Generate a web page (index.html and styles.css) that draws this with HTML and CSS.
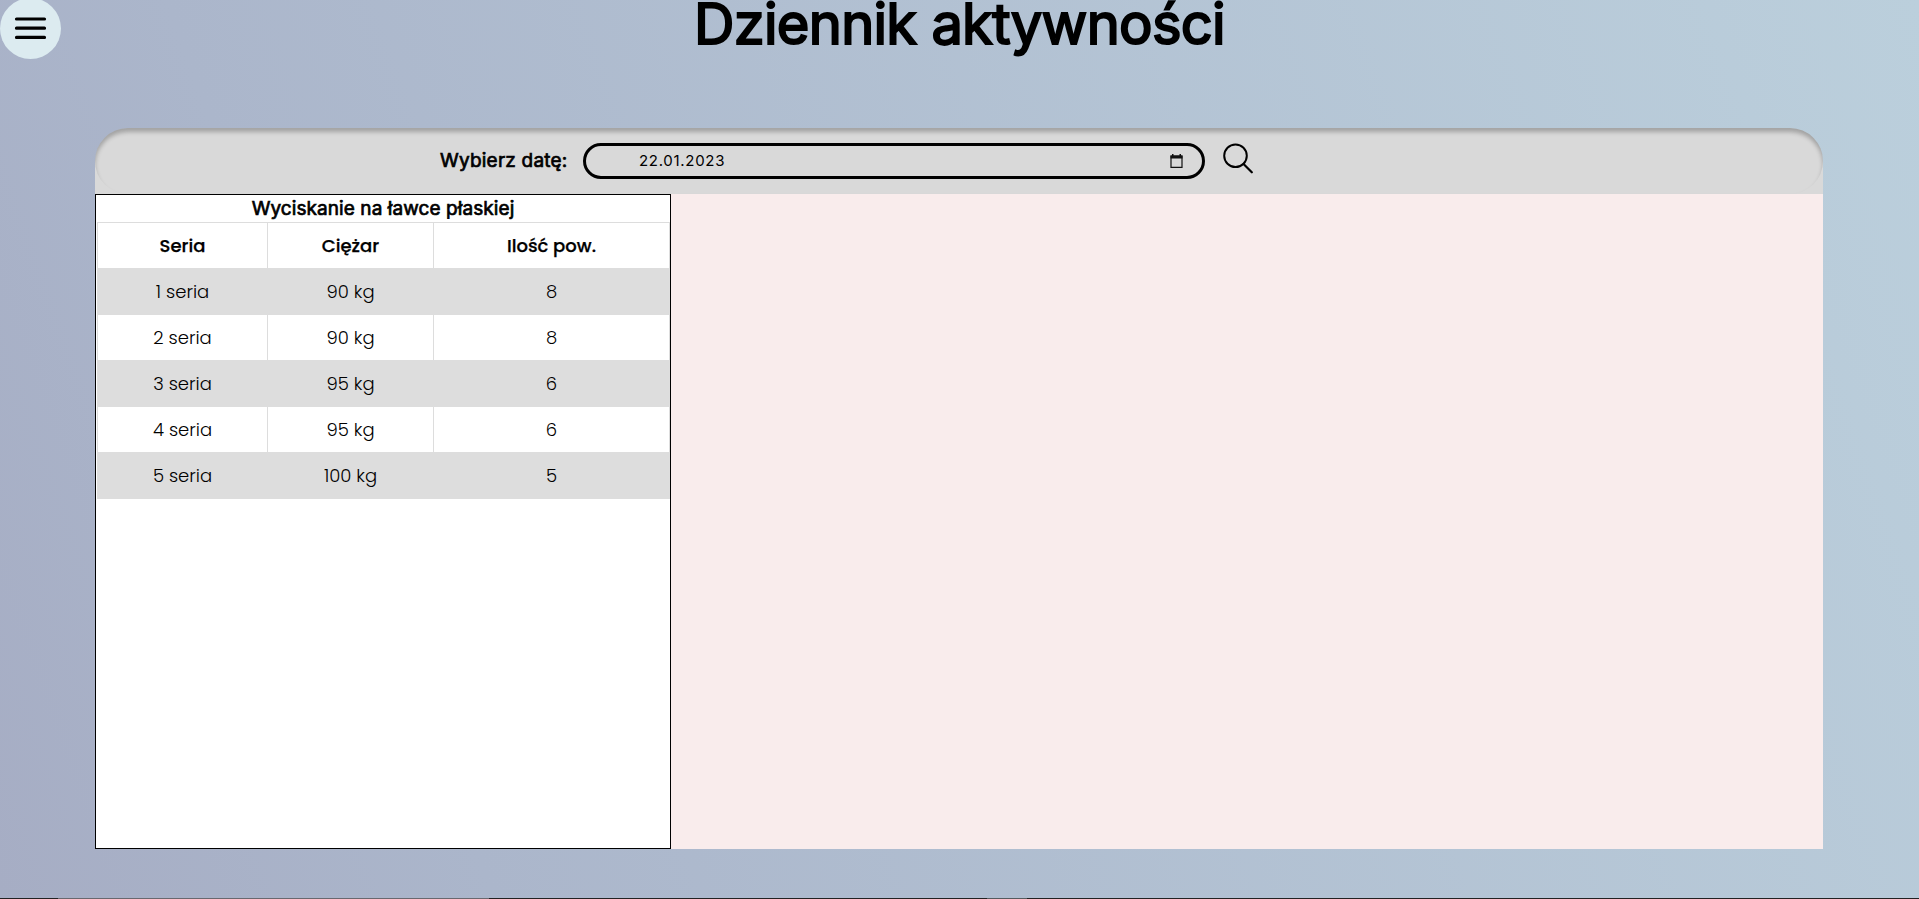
FILE: index.html
```html
<!DOCTYPE html>
<html lang="pl">
<head>
<meta charset="utf-8">
<title>Dziennik aktywności</title>
<link rel="stylesheet" href="styles.css">
</head>
<body>
<button class="menu-toggle" aria-label="Menu"><svg width="61" height="59" viewBox="0 0 61 59"><ellipse cx="30.5" cy="28.5" rx="30.5" ry="30.5" fill="#dcebf0"/><path d="M16.5 19H44.500M16.500 28.200H44.500M16.500 37.400H44.500" stroke="#000" stroke-width="3.200" stroke-linecap="round"/></svg></button>
<h1 class="title">Dziennik aktywności</h1>
<main class="journal">
  <form class="search-bar">
    <label class="date-label" for="date">Wybierz datę:</label>
    <div class="date-field" id="date"><span class="date-value">22.01.2023</span>
      <svg class="calendar" width="13" height="14" viewBox="0 0 13 14"><path d="M1 2h11v11.300H1z" fill="none" stroke="#111" stroke-width="1.200"/><path d="M.5 1.500h12v3H.5zM2 0h1.500v2H2zM9.500 0H11v2H9.500z" fill="#111"/></svg>
    </div>
    <svg class="search-icon" width="30" height="31" viewBox="0 0 30 31"><circle cx="12.500" cy="12.800" r="11.300" fill="none" stroke="#000" stroke-width="2"/><path d="M20.500 21l8.300 8.300" stroke="#000" stroke-width="2.200" stroke-linecap="round"/></svg>
  </form>
  <div class="content">
    <section class="exercise">
      <h2 class="exercise-name">Wyciskanie na ławce płaskiej</h2>
      <table class="sets">
        <colgroup><col class="col-set"><col class="col-weight"><col class="col-reps"></colgroup>
        <tr><th>Seria</th><th>Ciężar</th><th>Ilość pow.</th></tr>
        <tr><td>1 seria</td><td>90 kg</td><td>8</td></tr>
        <tr><td>2 seria</td><td>90 kg</td><td>8</td></tr>
        <tr><td>3 seria</td><td>95 kg</td><td>6</td></tr>
        <tr><td>4 seria</td><td>95 kg</td><td>6</td></tr>
        <tr><td>5 seria</td><td>100 kg</td><td>5</td></tr>
      </table>
    </section>
  </div>
</main>
<footer class="edge"></footer>
</body>
</html>
```
FILE: styles.css
```css
* { box-sizing: border-box; }
body { margin: 0; height: 899px; overflow: hidden; display: flex; flex-direction: column; font-family: Inter, sans-serif; font-optical-sizing: none; color: #000; background: linear-gradient(70deg, #a6adc4, #abb6cb 22%, #bbcfdc); }
.menu-toggle { position: absolute; left: 0; top: 0; padding: 0; border: 0; background: none; line-height: 0; }
.title { margin: 0; height: 128px; line-height: 48px; text-align: center; font-size: 56px; font-weight: 400; letter-spacing: -.72px; -webkit-text-stroke: 2px #000; white-space: nowrap; }
.journal { width: 1728px; height: 721px; margin-left: 95px; display: flex; flex-direction: column; }
.search-bar { height: 66px; padding: 0 0 0 345px; display: flex; align-items: flex-start; background: #d9d9d9; border-radius: 33px 33px 0 0; position: relative; }
.search-bar::before { content: ""; position: absolute; inset: 0; border-radius: 33px; box-shadow: inset 0 4px 4px rgba(0,0,0,.25); }
.date-label { width: 143px; line-height: 65px; font-size: 19px; font-weight: 400; letter-spacing: .22px; -webkit-text-stroke: .7px #000; white-space: nowrap; }
.date-field { width: 622px; height: 36px; margin-top: 15px; padding: 0 19px 1px 53px; display: flex; align-items: center; justify-content: space-between; border: 3px solid #000; border-radius: 18px; }
.date-value { font-size: 15px; letter-spacing: .7px; }
.search-icon { margin: 15px 0 0 18px; }
.content { flex: 1; display: flex; background: #f9ecec; }
.exercise { width: 576px; padding: 0 1px; border: 1px solid #000; background: #fff; }
.exercise-name { margin: 0; height: 27px; line-height: 27px; text-align: center; font-size: 19px; font-weight: 400; letter-spacing: .08px; -webkit-text-stroke: .7px #000; }
.sets { width: 573px; table-layout: fixed; border-collapse: collapse; font-family: Poppins, Inter, sans-serif; font-size: 18px; }
.sets tr { height: 46px; }
.sets th, .sets td { padding: 0; border: 1px solid #ddd; text-align: center; font-weight: 300; }
.sets th { font-weight: 500; -webkit-text-stroke: .25px #000; }
.sets tr:nth-child(even) { background: #ddd; }
.col-set { width: 170px; }
.col-weight { width: 166px; }
.edge { width: 100%; height: 1px; margin-top: auto; background: linear-gradient(to right, #222 58px, #69686e 58px 489px, #222 489px 987px, #555b5e 987px 1027px, #222 1027px); }
```
